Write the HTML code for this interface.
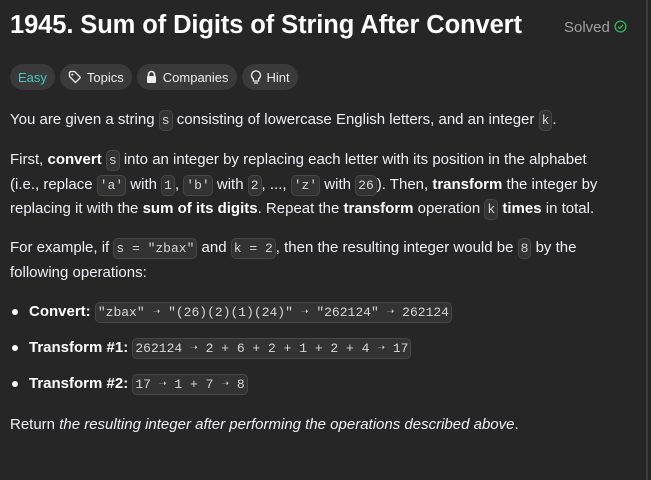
<!DOCTYPE html>
<html><head><meta charset="utf-8"><style>
html,body{margin:0;padding:0;background:#262626;width:651px;height:480px;overflow:hidden}
body{font-family:"Liberation Sans",sans-serif;color:#eff1f6;font-size:15px;position:relative}
.title{position:absolute;left:10px;top:11px;font-size:25.5px;font-weight:bold;color:#fff;letter-spacing:-0.1px;white-space:nowrap}
.solved{position:absolute;left:564px;top:19px;font-size:15px;color:#a0a0a0}
.tags{position:absolute;left:10px;top:64px;display:flex;gap:5px}
.tag{height:26px;border-radius:13px;background:#3a3a3a;color:#eee;font-size:13px;display:flex;align-items:center;padding:0 8px;gap:5px}
.easy{color:#46c6c2}
.c{position:absolute;left:10px;width:640px;line-height:23.5px;color:#eff1f6;white-space:nowrap}
code{font-family:"Liberation Mono",monospace;font-size:13px;background:#333;border:1px solid #474747;border-radius:5px;padding:2px 2px;color:#d8d8d8}
b{color:#fff}
ul{margin:0;padding:0;list-style:none}
li{position:relative;padding-left:19px;height:36px;line-height:23px}
li:before{content:"";position:absolute;left:2px;top:9px;width:6px;height:6px;border-radius:50%;background:#fff}
.sb{position:absolute;left:646px;top:0;width:2px;height:480px;background:#3b3b3b}
</style></head><body>
<div class="title">1945. Sum of Digits of String After Convert</div>
<div class="solved">Solved <svg width="13" height="13" viewBox="0 0 14 14" style="vertical-align:-1px"><circle cx="7" cy="7" r="5.8" fill="none" stroke="#2cbb5d" stroke-width="1.4"/><path d="M4.3 7.2l1.9 1.9 3.6-3.8" fill="none" stroke="#2cbb5d" stroke-width="1.4"/></svg></div>
<div class="tags">
<div class="tag easy">Easy</div>
<div class="tag"><svg width="14" height="14" viewBox="0 0 14 14"><path d="M1.5 2.5v4l6 6 5-5-6-6h-4z" fill="none" stroke="#eee" stroke-width="1.3" stroke-linejoin="round"/><circle cx="4.3" cy="4.6" r="1" fill="#eee"/></svg>Topics</div>
<div class="tag"><svg width="13" height="14" viewBox="0 0 13 14"><path d="M3.5 6V4.5a3 3 0 016 0V6" fill="none" stroke="#eee" stroke-width="1.6"/><rect x="2" y="6" width="9" height="7" rx="1" fill="#eee"/></svg>Companies</div>
<div class="tag"><svg width="12" height="15" viewBox="0 0 12 15"><path d="M6 1a4.3 4.3 0 00-2.6 7.8V11h5.2V8.8A4.3 4.3 0 006 1zM4 13h4" fill="none" stroke="#eee" stroke-width="1.3"/></svg>Hint</div>
</div>
<div class="c" style="top:108px">You are given a string <code>s</code> consisting of lowercase English letters, and an integer <code>k</code>.</div>
<div class="c" style="top:148px">First, <b>convert</b> <code>s</code> into an integer by replacing each letter with its position in the alphabet<br>(i.e., replace <code>'a'</code> with <code>1</code>, <code>'b'</code> with <code>2</code>, ..., <code>'z'</code> with <code>26</code>). Then, <b>transform</b> the integer by<br>replacing it with the <b>sum of its digits</b>. Repeat the <b>transform</b> operation <code>k</code> <b>times</b> in total.</div>
<div class="c" style="top:236px">For example, if <code>s = "zbax"</code> and <code>k = 2</code>, then the resulting integer would be <code>8</code> by the<br>following operations:</div>
<div class="c" style="top:300px"><ul>
<li><b>Convert:</b> <code>"zbax" ➝ "(26)(2)(1)(24)" ➝ "262124" ➝ 262124</code></li>
<li><b>Transform #1:</b> <code>262124 ➝ 2 + 6 + 2 + 1 + 2 + 4 ➝ 17</code></li>
<li><b>Transform #2:</b> <code>17 ➝ 1 + 7 ➝ 8</code></li>
</ul></div>
<div class="c" style="top:413px">Return <i>the resulting integer after performing the operations described above</i>.</div>
<div class="sb"></div>
</body></html>
